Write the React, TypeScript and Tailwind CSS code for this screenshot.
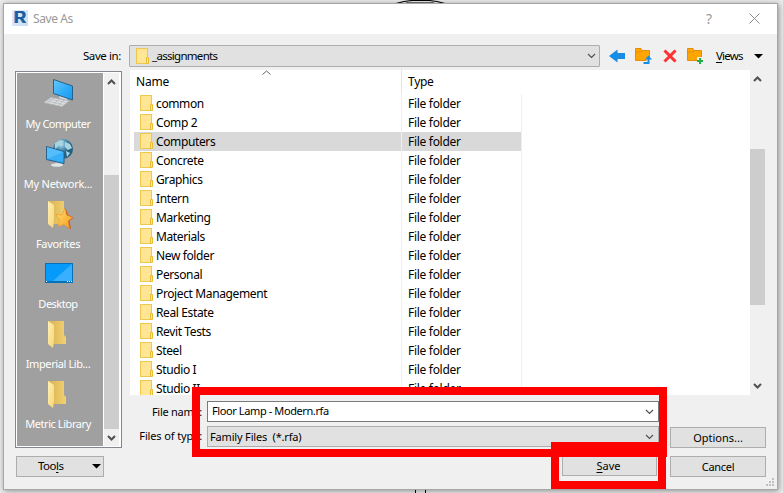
import React from "react";

const folders = [
  "common", "Comp 2", "Computers", "Concrete", "Graphics", "Intern", "Marketing", "Materials",
  "New folder", "Personal", "Project Management", "Real Estate", "Revit Tests", "Steel", "Studio I", "Studio II",
];

function Chevron({ up = false, thick = false }: { up?: boolean; thick?: boolean }) {
  return (
    <svg className="block shrink-0" width="9" height="6" viewBox="0 0 9 6">
      <path d={up ? "M1 5 L4.5 1.5 L8 5" : "M1 1 L4.5 4.5 L8 1"} fill="none" stroke="#505050" strokeWidth={thick ? 2 : 1.2} />
    </svg>
  );
}

function SmallFolder() {
  return (
    <svg className="block shrink-0" width="13" height="17" viewBox="0 0 13 17">
      <rect x="0.5" y="0.5" width="11" height="15" fill="#ffe594" stroke="#edc84e" />
      <path d="M10.5 9.5h2v6h-2z" fill="#ffe794" stroke="#e8bd35" />
    </svg>
  );
}

function OpenFolder({ star = false }: { star?: boolean }) {
  return (
    <svg className="block" width="32" height="32" viewBox="0 0 32 32">
      <defs>
        <linearGradient id="fb" x1="0" x2="1"><stop offset="0" stopColor="#d8b14e" /><stop offset="1" stopColor="#f2d174" /></linearGradient>
        <linearGradient id="ff" x1="0" x2="1" y2="1"><stop offset="0" stopColor="#fff0b4" /><stop offset="1" stopColor="#f6d577" /></linearGradient>
        <linearGradient id="st" x1="0" x2="1" y2="1"><stop offset="0" stopColor="#ffe36a" /><stop offset="1" stopColor="#f59a23" /></linearGradient>
      </defs>
      <path d="M5 3h16v14l2 2v7H11z" fill="url(#fb)" />
      <path d="M5 3l6 4v17l-1 6-5-4z" fill="url(#ff)" />
      {star && (
        <>
          <path d="M22.500 10l2.500 6.500 5.500 3-4 3.500 1.500 8-3-1-5-12z" fill="#cc5a2a" />
          <path d="M22 10l1.500 7 6 2.500-4.500 3.500 1.500 7.500-5.500-4-6 2 1.500-6.500-3.500-5.500 6 .5z" fill="url(#st)" stroke="#eb8b20" strokeWidth=".5" />
        </>
      )}
    </svg>
  );
}

function Computer() {
  return (
    <svg className="block" width="32" height="32" viewBox="0 0 32 32">
      <defs><linearGradient id="sc" x1="0" x2="1" y2="1"><stop offset="0" stopColor="#68c8fb" /><stop offset=".5" stopColor="#35aef8" /><stop offset="1" stopColor="#159aee" /></linearGradient></defs>
      <path d="M17 17l7 2v3l-8-2z" fill="#d4dade" />
      <path d="M10.500 1.500L29.500 8v14L10.500 15.500z" fill="url(#sc)" stroke="#27618c" />
      <path d="M8 19.500l18 3.500-7 5.500L1 24.500z" fill="#dce0e2" stroke="#b7bbbe" strokeWidth=".7" />
      <path d="M6 21l17 3.500M4 23l16 3.500M11 20l-7 5M16 21l-6 6M21 22l-6 6" stroke="#a9adb0" strokeWidth=".6" />
    </svg>
  );
}

function Network() {
  return (
    <svg className="block" width="32" height="32" viewBox="0 0 32 32">
      <defs><radialGradient id="gl" cx=".4" cy=".25"><stop offset="0" stopColor="#c8e7f1" /><stop offset=".5" stopColor="#5a9ab9" /><stop offset="1" stopColor="#24607f" /></radialGradient></defs>
      <circle cx="20" cy="11" r="10" fill="url(#gl)" />
      <path d="M12 5l5-3 4 1-2 3-4 2-3 4zM22 4l5 2 2 4-4 2-3-3zM23 13l4 2-3 4z" fill="#a9d3e1" />
      <path d="M12 23h6l1 4h-6z" fill="#bdc5ca" />
      <ellipse cx="14" cy="27" rx="6" ry="1.800" fill="#dfe4e7" />
      <path d="M3.500 8.500L21 13.500v12L3.500 21.500z" fill="#36aff8" stroke="#27618c" />
      <path d="M4 9l16 5-16 7z" fill="#65c5fb" opacity=".65" />
    </svg>
  );
}

function Desktop() {
  return (
    <svg className="block" width="32" height="32" viewBox="0 0 32 32">
      <rect x="2.500" y="5.500" width="27" height="19" fill="#069bfb" stroke="#0870b7" />
      <path d="M29 6v17H10z" fill="#39b0ff" />
      <path d="M3 23.500h26" stroke="#0870b7" />
      <path d="M3 23.500h1M24 23.500h1M26 23.500h1M28 23.500h1" stroke="#fff" />
    </svg>
  );
}

const places = [
  { label: "My Computer", icon: <Computer />, cls: "tracking-[-0.5px]" },
  { label: "My Network...", icon: <Network />, cls: "tracking-[-0.25px]" },
  { label: "Favorites", icon: <OpenFolder star />, cls: "tracking-[-0.3px]" },
  { label: "Desktop", icon: <Desktop />, cls: "tracking-[-0.5px]" },
  { label: "Imperial Lib...", icon: <OpenFolder />, cls: "tracking-[-0.4px]" },
  { label: "Metric Library", icon: <OpenFolder />, cls: "tracking-[-0.43px]" },
];

function OrangeFolder({ kind }: { kind: "up" | "new" }) {
  return (
    <svg className="block" width="17" height="17" viewBox="0 0 17 17">
      <path d="M.5.500h5.500l1 2h7.500v10H.500z" fill="#ffa500" stroke="#e58d0b" />
      <path d="M.5 4h5.500l1.500-1.500" fill="none" stroke="#e58d0b" />
      {kind === "up" ? (
        <>
          <path d="M8 15.500h5.500V10" fill="none" stroke="#f0f0f0" strokeWidth="4" />
          <path d="M8.500 15h5v-4" fill="none" stroke="#168ce5" strokeWidth="2" />
          <path d="M10 11.500L13.500 7.500 17 11.500z" fill="#168ce5" />
        </>
      ) : (
        <>
          <path d="M10 9h7v7h-7z" fill="#f0f0f0" />
          <path d="M13 10v6M10 13h6" stroke="#1fae4b" strokeWidth="2" />
        </>
      )}
    </svg>
  );
}

const button = "flex items-center border border-[#adadad] bg-[#e1e1e1] text-[11px]";

export default function App() {
  return (
    <div className="relative h-[493px] w-[783px] overflow-hidden bg-[#ececec] pl-[3px] pt-[3px] font-['Noto_Sans','Open_Sans',sans-serif] text-[12px] text-black">
      <svg className="absolute left-[394px] top-0" width="54" height="4" viewBox="0 0 54 4">
        <path d="M2 3.500L10 1.500 18 .500H35L43 1.500 51 3.500" fill="none" stroke="#000" strokeWidth="1.200" />
        <path d="M12 2.500h28" stroke="#777" />
      </svg>
      <svg className="absolute left-[415px] top-[489px] z-10" width="11" height="4"><path d="M.5 1v3M10.500 1v3" stroke="#000" /></svg>

      <div className="relative flex h-[487px] w-[775px] flex-col border border-[#a6a6a6] bg-[#f0f0f0] shadow-[1px_1px_6px_rgba(0,0,0,0.4)]">
        <header className="flex h-[30px] shrink-0 items-center bg-white pb-[2px] pl-2 text-[#999]">
          <span className="flex size-4 items-center justify-center bg-gradient-to-br from-[#e5effa] to-[#c9dcf0] pl-px font-['Liberation_Sans',sans-serif] text-[17px] font-bold leading-4 text-[#1f5c9b] [text-shadow:-1px_0_0_#3f83c0]">R</span>
          <span className="ml-[5px] pt-[2px] tracking-[-0.4px]">Save As</span>
          <span className="ml-auto w-[10px] text-center text-[14px]">?</span>
          <svg className="ml-[35px] mr-[17px]" width="11" height="11" viewBox="0 0 11 11"><path d="M.5.500l10 10M10.500.500l-10 10" stroke="#8d8d8d" /></svg>
        </header>

        <div className="flex h-[36px] shrink-0 items-center pt-[8px]">
          <span className="w-[117px] text-right text-[11.5px] tracking-[-0.4px]">Save in:</span>
          <div className="ml-2 flex h-[22px] w-[471px] items-center rounded-[1px] border border-[#adadad] bg-[#e1e1e1] pl-1.5 pr-[3px]">
            <SmallFolder />
            <span className="ml-[3px] text-[11.5px] tracking-[-0.7px]">_assignments</span>
            <span className="ml-auto"><Chevron /></span>
          </div>
          <svg className="ml-[9px]" width="16" height="14" viewBox="0 0 16 14"><path d="M0 7L8.500.500V4H16v6H8.500v3.500z" fill="#168ce5" /></svg>
          <span className="ml-[10px]"><OrangeFolder kind="up" /></span>
          <svg className="ml-[11px]" width="14" height="14" viewBox="0 0 14 14"><path d="M1.500 1.500l11 11M12.500 1.500l-11 11" stroke="#ff3030" strokeWidth="3" /></svg>
          <span className="ml-[10px]"><OrangeFolder kind="new" /></span>
          <span className="ml-[12px] w-[27px] text-[11.5px] tracking-[-0.8px]"><u className="underline-offset-2">V</u>iews</span>
          <svg className="ml-[11px]" width="9" height="5"><path d="M0 0h9L4.500 4.500z" /></svg>
        </div>

        <div className="flex min-h-0 flex-1">
          <aside className="ml-[11px] w-[107px] shrink-0 pt-px">
            <div className="flex h-[377px] border border-[#828790] bg-white p-px">
              <div className="w-[86px] bg-[#a0a0a0] pr-1 text-white">
                {places.map((p) => (
                  <div key={p.label} className="flex h-[60px] flex-col items-center pt-[5px]">
                    <span className="pl-[2px]">{p.icon}</span>
                    <span className={`mt-1 whitespace-nowrap text-[11px] leading-5 ${p.cls}`}>{p.label}</span>
                  </div>
                ))}
              </div>
              <div className="ml-px flex w-[15px] flex-col items-center bg-[#f0f0f0]">
                <span className="flex h-[102px] pt-[6px]"><Chevron up thick /></span>
                <span className="h-[254px] w-full bg-[#cdcdcd]" />
                <span className="mt-[6px]"><Chevron thick /></span>
              </div>
            </div>
            <div className={`${button} ml-px mt-2 h-[21px] w-[88px] pl-[21px] pr-[2px]`}>
              <span className="pb-[2px] text-[11.5px] tracking-[-0.5px]">Too<u className="underline-offset-2">l</u>s</span>
              <svg className="ml-auto" width="9" height="5"><path d="M0 0h9L4.500 4.500z" /></svg>
            </div>
          </aside>

          <main className="ml-2 flex flex-1 flex-col">
            <div className="flex h-[325px] shrink-0">
              <div className="flex w-[620px] flex-col overflow-hidden bg-white">
                <div className="flex h-6 shrink-0 items-center">
                  <div className="flex h-6 w-[272px] items-center border-r border-[#e5e5e5] pl-1.5">
                    <span className="w-[126px] tracking-[-0.2px]">Name</span>
                    <span className="-mt-5">
                      <svg width="9" height="5" viewBox="0 0 9 5"><path d="M.5 4.500l4-3.500 4 3.500" fill="none" stroke="#666" /></svg>
                    </span>
                  </div>
                  <span className="ml-[6px] tracking-[-0.3px]">Type</span>
                </div>
                {folders.map((name) => (
                  <div key={name} className={`ml-1 flex h-[19px] w-[388px] shrink-0 items-center ${name === "Computers" ? "bg-[#d9d9d9]" : ""}`}>
                    <div className="flex h-full w-[268px] items-center border-r border-[#e8f1f8] pl-1.5">
                      <SmallFolder />
                      <span className="ml-[3px] whitespace-nowrap tracking-[-0.38px]">{name}</span>
                    </div>
                    <span className="flex h-full w-[120px] items-center border-r border-[#e8f1f8] pl-[6px] tracking-[-0.3px]">File folder</span>
                  </div>
                ))}
              </div>
              <div className="flex w-[15px] flex-col items-center">
                <span className="flex h-[79px] pt-[6px]"><Chevron up thick /></span>
                <span className="h-[156px] w-full bg-[#cdcdcd]" />
                <span className="mt-[78px]"><Chevron thick /></span>
              </div>
            </div>

            <div className="mt-[6px] flex h-[21px] items-center text-[11px]">
              <span className="w-[72px] pt-[2px] text-right tracking-[-0.28px]">File name:</span>
              <div className="ml-[5px] flex h-[21px] w-[452px] items-center border border-[#7a7a7a] bg-white pl-1 pr-1">
                <span className="tracking-[-0.4px]">Floor Lamp - Modern.rfa</span>
                <span className="ml-auto"><Chevron /></span>
              </div>
            </div>
            <div className="mt-1 flex h-[22px] items-start text-[11px]">
              <span className="w-[72px] pt-[2px] text-right tracking-[-0.13px]">Files of type:</span>
              <div className={`${button} ml-[5px] h-[21px] w-[452px] pl-[2px] pr-1`}>
                <span className="whitespace-pre pt-px tracking-[-0.17px]">Family Files  (*.rfa)</span>
                <span className="ml-auto"><Chevron /></span>
              </div>
              <div className={`${button} ml-[11px] mt-px h-[21px] w-[96px] justify-center pt-px`}>Options...</div>
            </div>
            <div className="mt-[7px] flex pl-[432px]">
              <div className={`${button} h-[21px] w-[95px] justify-center pr-[2px] pt-px`}><span><u className="underline-offset-2">S</u>ave</span></div>
              <div className={`${button} ml-[13px] mt-px h-[21px] w-[96px] justify-center pt-px tracking-[-0.3px]`}>Cancel</div>
            </div>
          </main>
        </div>
        <svg className="absolute bottom-[2px] right-[2px]" width="9" height="9" fill="#bfbfbf">
          <path d="M6 0h2v2H6zM3 3h2v2H3zM6 3h2v2H6zM0 6h2v2H0zM3 6h2v2H3zM6 6h2v2H6z" />
        </svg>
      </div>

      <div className="absolute left-[192px] top-[387px] h-[70px] w-[475px] border-8 border-[#ff0000]" />
      <div className="absolute left-[551px] top-[442px] h-[47px] w-[115px] border-8 border-t-[15px] border-[#ff0000]" />
    </div>
  );
}
